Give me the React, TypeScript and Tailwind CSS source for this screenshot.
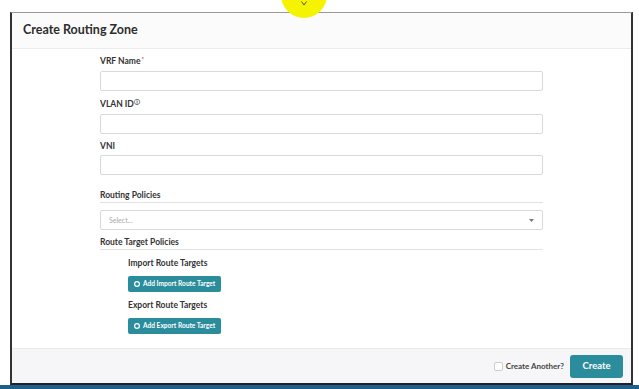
import React from "react";

function Label({ children }: { children: React.ReactNode }) {
  return (
    <div className="h-[10px] whitespace-nowrap text-[8.5px] font-bold leading-[10px] text-[#333]">
      {children}
    </div>
  );
}

function Input() {
  return <div className="h-[20px] w-full rounded-[2px] border border-[#d9d9d9] bg-white" />;
}

function AddButton({ text }: { text: string }) {
  return (
    <div className="flex h-[16px] w-fit items-center gap-[3px] rounded-[2px] bg-[#2b8c9c] px-[6px] text-[6.6px] font-bold text-white">
      <svg width="6" height="6" viewBox="0 0 10 10">
        <circle cx="5" cy="5" r="4" fill="none" stroke="white" strokeWidth="2" />
      </svg>
      <span>{text}</span>
    </div>
  );
}

export default function App() {
  return (
    <div
      className="relative h-[389px] w-[639px] overflow-hidden bg-white"
      style={{ fontFamily: "Lato, 'Open Sans', sans-serif" }}
    >
      <div className="flex h-full flex-col">
        <div className="h-[12px] shrink-0" />
        <div className="ml-[10px] flex h-[373px] w-[623px] flex-col border-b-2 border-l-2 border-r-2 border-t border-b-[#222] border-l-[#333] border-r-[#333] border-t-[#9a9a9a]">
          {/* header */}
          <div className="flex h-[36px] shrink-0 items-center border-b border-[#ececec] bg-[#fbfbfb] pl-[11px]">
            <span className="text-[12.5px] font-bold text-[#2d2d2d]">Create Routing Zone</span>
          </div>
          {/* body */}
          <div className="flex flex-1 flex-col bg-white">
            <div className="mx-auto flex w-[443px] flex-col pt-[7px]">
              <Label>
                VRF Name<span className="relative top-[-3px] ml-[1px] text-[6px] text-[#d33]">*</span>
              </Label>
              <div className="mt-[5px]"><Input /></div>
              <div className="mt-[8px]">
                <Label>
                  VLAN ID<span className="relative top-[-3px] text-[6px]">&#9432;</span>
                </Label>
              </div>
              <div className="mt-[5px]"><Input /></div>
              <div className="mt-[7px]"><Label>VNI</Label></div>
              <div className="mt-[4px]"><Input /></div>
              <div className="mt-[15px] border-b border-[#e2e2e2] pb-[2px]">
                <Label>Routing Policies</Label>
              </div>
              <div className="mt-[7px] flex h-[20px] items-center justify-between rounded-[2px] border border-[#d9d9d9] px-[8px]">
                <span className="text-[7px] text-[#aaa]">Select...</span>
                <svg width="5" height="3" viewBox="0 0 5 3">
                  <path d="M0 0 L5 0 L2.5 3 Z" fill="#777" />
                </svg>
              </div>
              <div className="mt-[7px] border-b border-[#e2e2e2] pb-[2px]">
                <Label>Route Target Policies</Label>
              </div>
              <div className="ml-[28px] flex flex-col">
                <div className="mt-[8px]"><Label>Import Route Targets</Label></div>
                <div className="mt-[8px]"><AddButton text="Add Import Route Target" /></div>
                <div className="mt-[8px]"><Label>Export Route Targets</Label></div>
                <div className="mt-[8px]"><AddButton text="Add Export Route Target" /></div>
              </div>
            </div>
          </div>
          {/* footer */}
          <div className="flex h-[35px] shrink-0 items-center justify-end gap-[3px] border-t border-[#ebebeb] bg-[#f6f6f8] pr-[8px]">
            <div className="h-[9px] w-[9px] rounded-[2px] border border-[#ccc] bg-white" />
            <span className="mr-[3px] text-[8px] font-bold text-[#444]">Create Another?</span>
            <div className="flex h-[23px] w-[53px] items-center justify-center rounded-[3px] bg-[#2b8c9c] text-[9.5px] font-bold text-white">
              Create
            </div>
          </div>
        </div>
        <div className="flex-1 bg-[#1f5d8c]" />
      </div>

      {/* cursor highlight */}
      <div className="absolute left-[281px] top-[-28px] h-[46px] w-[46px] rounded-full bg-[#f6f300]" />
      <div className="absolute left-[301px] top-[1px] h-[5px] w-[6px]">
        <svg width="6" height="5" viewBox="0 0 6 5">
          <path d="M0.5 0.5 L3 4 L5.5 0.5" fill="none" stroke="#555" strokeWidth="1" />
        </svg>
      </div>
    </div>
  );
}
